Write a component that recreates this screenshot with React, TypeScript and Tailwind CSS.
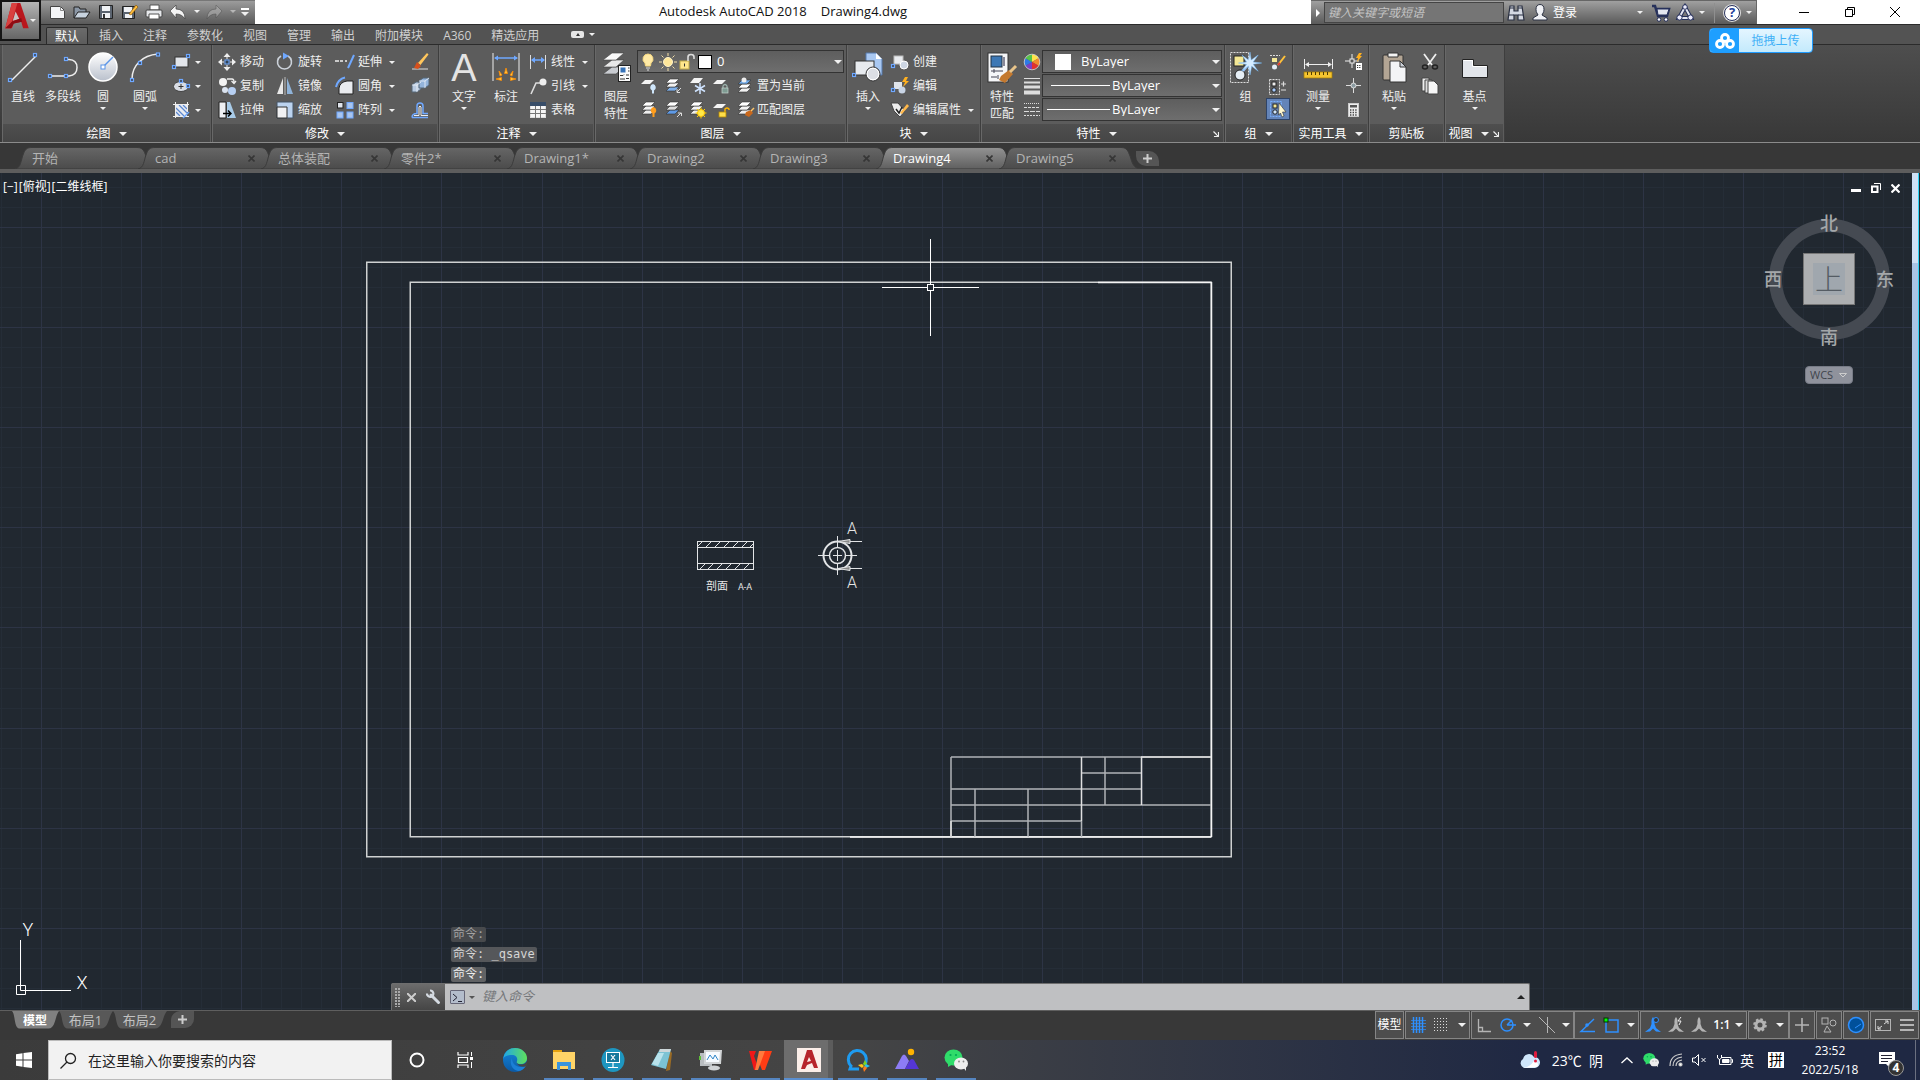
import React from "react";

type Kids = { children?: React.ReactNode };

const BLUE = "#6fa8ff";

function Ico({ s = 20, children }: Kids & { s?: number }) {
  return (
    <svg width={s} height={s} viewBox={`0 0 ${s} ${s}`} fill="none" className="shrink-0" aria-hidden="true">
      {children}
    </svg>
  );
}

function Tri({ big = false }: { big?: boolean }) {
  return big ? (
    <svg width="8" height="4" viewBox="0 0 8 4" className="shrink-0" aria-hidden="true"><path d="M0 0H8L4 4Z" fill="#f0f0f0" /></svg>
  ) : (
    <svg width="6" height="3" viewBox="0 0 6 3" className="shrink-0" aria-hidden="true"><path d="M0 0H6L3 3Z" fill="#f0f0f0" /></svg>
  );
}

/* Small grip square drawn at the ends of geometry icons. */
function Grip({ x, y }: { x: number; y: number }) {
  return <rect x={x - 1.5} y={y - 1.5} width="3" height="3" fill="#3b4658" stroke={BLUE} strokeWidth="1.2" />;
}

function Sheets({ fills, y = 3 }: { fills: string[]; y?: number }) {
  return (
    <>
      {fills.map((f, i) => (
        <path key={i} d={`M7 ${y + (fills.length - 1 - i) * 4}h9l-4 4h-9z`} fill={f} stroke="#333" strokeWidth=".6" />
      ))}
    </>
  );
}

function Launcher() {
  return (
    <svg width="6" height="6" viewBox="0 0 6 6" aria-hidden="true"><path d="M.5 .5L5 5M5.500 1V5.500H1" stroke="#eee" fill="none" strokeWidth="1.200" /></svg>
  );
}

function Panel({ title, width, arrow = true, launcher = false, children }: Kids & { title: string; width: string; arrow?: boolean; launcher?: boolean }) {
  return (
    <section className={`flex shrink-0 flex-col border-r border-l border-r-[#3e3e3e] border-l-[#686868] bg-[#5c5c5c] ${width}`}>
      <div className="-ml-px flex h-[79px] pt-[5px]">{children}</div>
      <button className={`relative mr-px flex h-[18px] items-center justify-center gap-2 bg-linear-to-b from-[#4f4f4f] to-[#464646] pt-px whitespace-nowrap text-white ${launcher ? "pr-3" : ""}`}>
        <span>{title}</span>
        {arrow && <Tri big />}
        {launcher && <span className="absolute right-[4px]"><Launcher /></span>}
      </button>
    </section>
  );
}

function Big({ icon, label, label2, width, arrow = false }: { icon: React.ReactNode; label: string; label2?: string; width: string; arrow?: boolean }) {
  return (
    <button className={`flex shrink-0 flex-col items-center pt-[2px] ${width}`}>
      <span className="mb-1 h-8">{icon}</span>
      <span className="leading-[17px] whitespace-nowrap">{label}</span>
      {label2 && <span className="leading-[17px]">{label2}</span>}
      {arrow && <span className="mt-[2px]"><Tri /></span>}
    </button>
  );
}

function Row({ icon, label, arrow = false }: { icon: React.ReactNode; label?: string; arrow?: boolean }) {
  return (
    <button className="flex h-6 items-center gap-[2px] whitespace-nowrap">
      <span className="flex w-[22px] justify-center">{icon}</span>
      {label && <span>{label}</span>}
      {arrow && <span className={label ? "ml-[5px]" : "ml-px"}><Tri /></span>}
    </button>
  );
}

/* ---------- ribbon icons ---------- */
const line = <Ico s={32}><path d="M5 28L29 4" stroke="#eee" strokeWidth="1.500" /><Grip x={3} y={28} /><Grip x={28} y={3} /></Ico>;
const pline = <Ico s={32}><path d="M2 24H18H22Q30 23 30 15.500T22 7.500H18" stroke="#eee" strokeWidth="1.500" /><Grip x={3} y={24} /><Grip x={19} y={24} /><Grip x={19} y={7} /></Ico>;
const circle = (
  <Ico s={32}>
    <defs><linearGradient id="ball" x2="0" y2="1"><stop stopColor="#fff" /><stop offset="1" stopColor="#b9c0cc" /></linearGradient></defs>
    <circle cx="16" cy="15" r="14" fill="url(#ball)" stroke="#fff" strokeWidth="1.500" /><path d="M16 15L26 5" stroke="#5b95e8" strokeWidth="1.500" /><rect x="14" y="13" width="4" height="4" fill="#fff" stroke="#5b95e8" />
  </Ico>
);
const arc = <Ico s={32}><path d="M3 27Q3 17 10 10T29 2" stroke="#eee" strokeWidth="1.500" /><Grip x={3} y={28} /><Grip x={11} y={11} /><Grip x={29} y={2.500} /></Ico>;
const rectI = <Ico><rect x="4" y="5" width="13" height="10" fill="#e2e5ea" stroke="#333" /><Grip x={3} y={15} /><Grip x={17} y={4} /></Ico>;
const ellI = <Ico><ellipse cx="10" cy="10.500" rx="7.500" ry="5" fill="#d9dde4" stroke="#444" /><path d="M10 8v5M7.500 10.500h5" stroke="#333" /><Grip x={10} y={5} /><Grip x={17} y={10} /></Ico>;
const hatchI = <Ico><rect x="5" y="5" width="11" height="11" fill="#e8ecf3" /><path d="M5 8l8 8M5 12l4 4M8 5l8 8M12 5l4 4" stroke="#5b87cf" strokeWidth="1.200" /><path d="M2 4.500H18M2 16.500H18M4.500 2V18M16.500 2V12" stroke="#eee" /><path d="M12 18l6-6" stroke={BLUE} strokeWidth="1.500" /></Ico>;
const moveI = <Ico><path d="M10 1l3.500 4h-7zM10 19l3.500-4h-7zM1 10l4-3.500v7zM19 10l-4-3.500v7z" fill="#eee" /><rect x="8" y="8" width="4" height="4" fill="#345" stroke={BLUE} /><path d="M10 4v3M10 13v3M4 10h3M13 10h3" stroke="#eee" /></Ico>;
const rotI = <Ico><path d="M6 4A7 7 0 1 0 13 4" stroke="#ccd2da" strokeWidth="1.600" /><path d="M8 .5L14 4L8 7.500z" fill={BLUE} /></Ico>;
const extI = <Ico><path d="M0 9h4M5 9h3M10 9h2" stroke="#eee" strokeWidth="1.500" /><path d="M19 3L13 16" stroke={BLUE} strokeWidth="2" /></Ico>;
const copyI = <Ico><circle cx="6" cy="6" r="4" fill="#f2f2f2" /><circle cx="8" cy="14" r="3" fill="#dbe3ef" /><circle cx="15" cy="15" r="4" fill="#b7cff2" /><path d="M10 3h5q2 0 2 3M14.500 5l2.500 2.500L19 5" stroke="#eee" strokeWidth="1.300" /></Ico>;
const mirI = <Ico><path d="M8 2v16H2z" fill="#e8e8e8" /><path d="M12 2v16h6z" fill="#8fb3d9" /><path d="M10 1v18" stroke="#bbb" /></Ico>;
const filI = <Ico><path d="M4 18V12Q5 6 12 5h6v13z" fill="#e9ebee" stroke="#222" /><path d="M1 11Q3 3 10 1.500" stroke={BLUE} strokeWidth="2" /></Ico>;
const strI = <Ico><path d="M2 2h7v16H2z" fill="#eef0f3" stroke="#222" /><path d="M10 2h3l6 16h-9z" fill="#a8cbe8" /><path d="M6 13.500h8M11 10.500l3 3-3 3" stroke="#000" strokeWidth="1.400" /></Ico>;
const scaI = <Ico><path d="M2 2h16v16H2z" fill="#bcd3ef" stroke="#456" /><path d="M2 7h10v11H2z" fill="#f0f1f3" stroke="#333" /></Ico>;
const arrI = <Ico><rect x="2.500" y="2.500" width="5.500" height="5.500" fill="#dfe3ea" stroke="#222" /><rect x="12" y="2.500" width="6" height="6" fill="#a9c5ee" stroke={BLUE} /><rect x="2" y="12" width="6" height="6" fill="#a9c5ee" stroke={BLUE} /><rect x="12" y="12" width="6" height="6" fill="#a9c5ee" stroke={BLUE} /></Ico>;
const brushI = <Ico><path d="M2 17h16" stroke="#ddd" /><path d="M8 11L17 1l1.500 1.500L10.500 13z" fill="#ffc65c" /><path d="M7 10l4 4-3 3-4-1z" fill="#d8501c" /></Ico>;
const explI = <Ico><path d="M2 9l4-3h5v7l-4 3H2z" fill="#b9cbe2" stroke="#567" /><path d="M9 5l4-3h6v7l-4 3H9z" fill="#93b4dc" stroke="#567" /><path d="M2 9h5v7M7 9l4-3M9 5h6v7M15 5l4-3" stroke="#f0f4fa" strokeWidth=".8" /></Ico>;
const offI = <Ico><path d="M2 17.500H18M2 17.500q0-4 5-4V6Q7 3 10 3t3 3v7.500h5" stroke={BLUE} strokeWidth="1.500" /><path d="M4 15.500h5V7q1-2 2 0v8.500h7" stroke="#eee" /></Ico>;
const textI = <span className="block font-['Liberation_Sans',sans-serif] text-[38px] leading-8 text-[#e4e4e4]">A</span>;
const dimI = <Ico s={32}><path d="M3 1v28M29 1v28" stroke="#eee" /><path d="M5 6h22" stroke={BLUE} strokeWidth="1.500" /><path d="M4 6l4-2.500v5zM28 6l-4-2.500v5z" fill={BLUE} /><path d="M16 16l1.500 5.500h-3zM9 19l3 4-2 1zM23 19l-3 4 2 1zM6 27l5.500-1.500v3zM26 27l-5.500-1.500v3z" fill="#ffcf4b" stroke="#ff8a00" strokeWidth=".8" /></Ico>;
const linI = <Ico><path d="M2.500 3v14M17.500 3v14" stroke="#ddd" /><path d="M4 8h12" stroke={BLUE} strokeWidth="1.500" /><path d="M3 8l4-3v6zM17 8l-4-3v6z" fill={BLUE} /></Ico>;
const leadI = <Ico><path d="M3 18L8 7H12" stroke="#ddd" strokeWidth="1.600" /><circle cx="15" cy="6" r="3.500" fill="#eee" /></Ico>;
const tabI = <Ico><rect x="2.500" y="2.500" width="15" height="15" fill="#f5f5f5" stroke="#ddd" /><rect x="2" y="2" width="16" height="4" fill="#384d68" /><path d="M2 9.500h16M2 13.500h16M7.500 6v12M12.500 6v12" stroke="#777" /></Ico>;
const layI = (
  <Ico s={32}>
    <path d="M12 15h12l-8 7H3z" fill="#c9ccd1" stroke="#444" strokeWidth=".6" /><path d="M12 8h12l-8 7H3z" fill="#e8e8e8" stroke="#444" strokeWidth=".6" /><path d="M12 1h12l-8 7H3z" fill="#fafafa" stroke="#444" strokeWidth=".6" />
    <rect x="18.500" y="13.500" width="12" height="16" fill="#fafafa" stroke="#222" /><rect x="20.500" y="15.500" width="5" height="5" fill="#3672b8" /><path d="M28 16h1.500M28 19h1.500M20 23.500h3l1-1M26 23h3M20 27h5M26 26.500h3" stroke="#333" />
  </Ico>
);
const bulbI = <Ico><path d="M10 2a5 5 0 0 1 3 9l-.5 3h-5L7 11a5 5 0 0 1 3-9z" fill="#ffeaa6" stroke="#f7d981" /><path d="M8 16h4M9 18h2" stroke="#ddd" /></Ico>;
const sunI = <Ico><circle cx="10" cy="10" r="4.500" fill="#ffe79a" stroke="#fff3c8" /><path d="M10 1v3M10 16v3M1 10h3M16 10h3M3.500 3.500l2 2M14.500 14.500l2 2M16.500 3.500l-2 2M5.500 14.500l-2 2" stroke="#f3dfa8" /></Ico>;
const lockI = <Ico><rect x="2" y="9" width="9" height="8" fill="#ffe68c" stroke="#bfa84a" /><path d="M10 9V5q0-2.500 3-2.500T16 5v2" stroke="#ddd" strokeWidth="1.600" /><path d="M6.500 11.500v3" stroke="#333" /></Ico>;
const lA = [
  <><path d="M6 4h9l-4 4H2z" fill="#f4f4f4" /><path d="M14 8a3.500 3.500 0 0 1 1 6.500v3h-2v-3A3.500 3.500 0 0 1 14 8z" fill="#cfe6fb" /></>,
  <><Sheets fills={["#7fb0ea", "#f1f1f1", "#fff"]} /><path d="M18 12l-4 4M14 13v3.500h3" stroke="#ddd" /></>,
  <><path d="M7 2h9l-4 5H3z" fill="#f4f4f4" /><path d="M13 7v11M8 9.500l10 6M18 9.500l-10 6" stroke="#cfe3ff" strokeWidth="1.500" /></>,
  <><path d="M6 4h9l-4 4H2z" fill="#f4f4f4" /><path d="M12 12v-2q2-3 4 0v2" stroke="#9db3ad" strokeWidth="1.300" /><rect x="11" y="12" width="6" height="5" fill="#7f9c93" stroke="#c5d4cf" strokeWidth=".7" /></>,
  <><Sheets fills={["#f1f1f1", "#fff", "#6fa8e6"]} y={4} /><circle cx="9" cy="4" r="2.500" fill="#eee" /></>,
];
const lB = [
  <><Sheets fills={["#eee", "#f3f3f3", "#fff"]} y={2} /><path d="M14.500 7a3.500 3.500 0 0 1 1 6.500v3.500h-2v-3.500a3.500 3.500 0 0 1 1-6.500z" fill="#ff9d1c" /></>,
  <><Sheets fills={["#5f9ae6", "#ddd", "#fff"]} y={2} /><path d="M14 17l4-4M15 13h3.500v3" stroke="#ddd" /></>,
  <><Sheets fills={["#eee", "#f3f3f3", "#fff"]} y={2} /><path d="M14 7.500v11M8.500 13h11M10 9l8 8M18 9l-8 8" stroke="#ffd200" /><circle cx="14" cy="13" r="3.500" fill="#ffe94a" stroke="#ffc400" /></>,
  <><path d="M6 4h9l-4 4H2z" fill="#f4f4f4" /><path d="M14 12V9q2-2 4 0v1" stroke="#ffb400" strokeWidth="1.400" /><rect x="8" y="12" width="7" height="5" fill="#ffdf4a" stroke="#b98a00" strokeWidth=".8" /></>,
  <><Sheets fills={["#eee", "#f3f3f3", "#fff"]} y={2} /><path d="M11 12l5-2 2 3-4 4-4-2z" fill="#c9681c" /><path d="M16 11l3-3" stroke="#ffc66b" strokeWidth="1.500" /></>,
];
const insI = <Ico s={32}><path d="M14 1h10l6 6v16H14z" fill="#a9c8f2" stroke="#5578ab" /><path d="M24 1v6h6z" fill="#fff" /><rect x="3" y="9" width="19" height="14" fill="#e7eaee" stroke="#333" /><circle cx="21" cy="22" r="7" fill="#dcdfe5" stroke="#333" /><circle cx="21" cy="22" r="5.800" stroke="#fff" /><Grip x={2} y={23} /></Ico>;
const creI = <Ico><rect x="4" y="4" width="9" height="8" fill="#e9ecf0" stroke="#bbb" /><circle cx="14" cy="13" r="4" fill="#cdd6e4" stroke="#fff" /><Grip x={3} y={14} /></Ico>;
const ediI = <Ico><rect x="4" y="6" width="8" height="7" fill="#dfe4ea" /><circle cx="12" cy="14" r="3.500" fill="#c9d5e6" /><path d="M15 1l-3 5h3l-2 5 6-6h-3l2-4z" fill="#ffb01f" /><Grip x={3} y={14} /></Ico>;
const attI = <Ico><path d="M1 3h7l7 8-5 6-6-6z" fill="#eee" stroke="#444" /><path d="M6 9l3 4 3-6" stroke="#222" strokeWidth="1.500" /><path d="M10 13l7-9 2 2-7 8z" fill="#ffb84a" /></Ico>;
const matI = <Ico s={32}><rect x="2" y="1" width="20" height="29" fill="#f5f6f8" stroke="#333" /><rect x="5" y="4" width="11" height="11" fill="#3d78b5" stroke="#234" /><path d="M18 5v9" stroke="#889" strokeWidth="2" /><path d="M5 19h12M8 17v4M5 25h6M12 23v4" stroke="#445" /><path d="M15 24l8-6 4 4-8 9-6-3z" fill="#c4792f" /><path d="M24 20l6-6" stroke="#e8c48a" strokeWidth="3" /></Ico>;
const wheel = (
  <Ico>
    <path d="M9 10V2.500A7.500 7.500 0 0 1 15.500 6.200z" fill="#ffe34a" /><path d="M9 10l6.500-3.800a7.500 7.500 0 0 1 0 7.600z" fill="#f28a2e" /><path d="M9 10l6.500 3.800A7.500 7.500 0 0 1 9 17.500z" fill="#e0322e" /><path d="M9 10v7.500a7.500 7.500 0 0 1-6.500-3.700z" fill="#7c3fc4" /><path d="M9 10l-6.500 3.800a7.500 7.500 0 0 1 0-7.600z" fill="#2e7ae6" /><path d="M9 10L2.500 6.200A7.500 7.500 0 0 1 9 2.500z" fill="#56c34a" /><circle cx="9" cy="10" r="7.800" stroke="#fff" strokeOpacity=".6" />
  </Ico>
);
const lwI = <Ico><path d="M1 2.500h16" stroke="#ddd" /><path d="M1 6.500h16" stroke="#ddd" strokeWidth="2" /><path d="M1 11h16" stroke="#ddd" strokeWidth="3" /><path d="M1 16.500h16" stroke="#ddd" strokeWidth="4" /></Ico>;
const ltI = <Ico><path d="M1 3.500h16" stroke="#ddd" strokeDasharray="1 1" /><path d="M1 7.500h16" stroke="#ddd" strokeDasharray="3 1" /><path d="M1 11.500h16" stroke="#ddd" strokeDasharray="5 1" /><path d="M1 15.500h16" stroke="#ddd" strokeDasharray="2 1" /></Ico>;
const grpI = <Ico s={32}><rect x=".5" y=".5" width="18" height="30" stroke="#ddd" strokeDasharray="2 1" /><rect x="4" y="4" width="10" height="10" fill="#f4e896" stroke="#222" /><circle cx="10" cy="23" r="5" fill="#e6eef5" stroke="#222" /><path d="M13 19L20 11" stroke="#9cc8ff" strokeWidth="2" /><path d="M20 0l1.200 8 7-5-5 7 8.500 1-8.500 1.200 5 7-6.500-5L20 23l-1.500-9-7 5 5-6.500-8-1.500 8-1-4.500-7 6.500 5z" fill="#d5ecff" stroke="#6fb4f5" strokeWidth=".5" /></Ico>;
const g1 = <Ico><path d="M2 2.500h10" stroke="#ddd" strokeDasharray="2 1" /><rect x="4" y="5" width="5" height="4" fill="#f4e896" /><circle cx="6.500" cy="14" r="2.500" fill="#e4eef8" /><path d="M10 12l7-9" stroke="#ffc23a" strokeWidth="2" /><path d="M10 12l2-2" stroke="#e03a3a" strokeWidth="2" /></Ico>;
const g2 = <Ico><rect x="1.500" y="2.500" width="10" height="15" stroke="#ddd" strokeDasharray="2 1" /><rect x="4" y="5" width="4" height="4" fill="#eee" stroke="#222" /><circle cx="6" cy="13" r="2.200" fill="#a8ccff" stroke="#222" /><path d="M13 7h5M15.500 4.500v5M13 13h5" stroke="#ddd" strokeWidth="1.200" /></Ico>;
const g3 = <Ico><rect x="2.500" y="2.500" width="11" height="15" stroke="#78b0ff" strokeDasharray="2 1" /><rect x="5" y="5" width="4" height="4" fill="#f4e896" stroke="#222" /><circle cx="7" cy="13" r="2.200" fill="#cfe6ff" stroke="#222" /><path d="M11 4l7 9h-3.500l1.500 4-2 1-1.500-4-2 2z" fill="#fff7cf" stroke="#333" strokeWidth=".6" /></Ico>;
const meaI = <Ico s={32}><path d="M2.500 7v10M30.500 7v10M4 12.500h25" stroke="#eee" /><path d="M3 12.500l4-2.500v5zM30 12.500l-4-2.500v5z" fill="#eee" /><rect x="2" y="20" width="28" height="6" fill="#f4c430" stroke="#a67c00" strokeWidth=".7" /><path d="M5.500 20v3M9.500 20v3M13.500 20v3M17.500 20v3M21.500 20v3M25.500 20v3" stroke="#4f3b00" /></Ico>;
const u1 = <Ico><path d="M8 2v14M1 9h14" stroke="#eee" /><rect x="6" y="7" width="4" height="4" fill="#555" stroke="#eee" /><path d="M15 1l-3 5h2l-1 4 5-6h-2l2-3z" fill="#ffb01f" /><rect x="12" y="11" width="6" height="7" fill="#fff" /><path d="M13 13.500h4M13 15.500h4" stroke="#333" strokeDasharray="1 .8" /></Ico>;
const u2 = <Ico><path d="M9.500 2v15M2 9.500h15" stroke="#ddd" /><circle cx="9.500" cy="9.500" r="2.500" fill="#8a9aa0" stroke="#ddd" /></Ico>;
const u3 = <Ico><rect x="4.500" y="3.500" width="10" height="13" fill="#eee" stroke="#ccc" /><rect x="6" y="5" width="7" height="2.500" fill="#555" /><path d="M6 10h7M6 12.500h7M6 15h7" stroke="#444" strokeWidth="1.300" strokeDasharray="1.400 1.200" /></Ico>;
const pasI = <Ico s={32}><rect x="5" y="3" width="20" height="25" rx="1" fill="#b3a594" stroke="#333" /><path d="M10 1h10v4H10z" fill="#f4f4f4" stroke="#333" /><path d="M12 9h10l6 6v15H12z" fill="#f3f4f6" stroke="#333" /><path d="M22 9v6h6z" fill="#cbd0d8" stroke="#333" /></Ico>;
const cutI = <Ico><path d="M4 2l8 11M16 2L8 13" stroke="#eee" strokeWidth="1.800" /><ellipse cx="5" cy="15" rx="2.500" ry="2" stroke="#222" strokeWidth="1.500" /><ellipse cx="15" cy="15" rx="2.500" ry="2" stroke="#222" strokeWidth="1.500" /></Ico>;
const cpI = <Ico><path d="M2 2h7v13H2z" fill="#eee" stroke="#444" /><path d="M5 4h7v13H5z" fill="#ddd" stroke="#444" /><path d="M8 5h6l4 4v9H8z" fill="#f7f7f7" stroke="#444" /></Ico>;
const baseI = <Ico s={32}><path d="M3.500 7.500h11v6h14v12h-25z" fill="#e2e5ea" stroke="#222" /><path d="M4.500 8.500h9v6h14" stroke="#fff" /></Ico>;

function Combo({ label, value, lead }: { label: string; value: string; lead: React.ReactNode }) {
  return (
    <label className="flex h-[23px] items-center border border-[#333] bg-linear-to-b from-[#5e5e5e] to-[#6e6e6e] pr-px">
      {lead}
      <select aria-label={label} className="min-w-0 flex-1 appearance-none bg-transparent text-[13px] leading-none text-white outline-none">
        <option>{value}</option>
      </select>
      <Tri big />
    </label>
  );
}

function Ribbon() {
  return (
    <div className="flex h-[99px] border-y border-t-[#2b2b2b] border-b-[#8b8b8b] bg-linear-to-b from-[#4e4e4e] to-[#383838] pl-[2px] text-[12px] text-[#efefef]">
      <Panel title="绘图" width="w-[210px]">
        <Big icon={line} label="直线" width="w-[42px]" />
        <Big icon={pline} label="多段线" width="w-[38px]" />
        <Big icon={circle} label="圆" width="w-[42px]" arrow />
        <Big icon={arc} label="圆弧" width="w-[42px]" arrow />
        <div className="flex flex-col pl-1">
          <Row icon={rectI} arrow /><Row icon={ellI} arrow /><Row icon={hatchI} arrow />
        </div>
      </Panel>
      <Panel title="修改" width="w-[227px]">
        <div className="flex w-[62px] flex-col pl-1"><Row icon={moveI} label="移动" /><Row icon={copyI} label="复制" /><Row icon={strI} label="拉伸" /></div>
        <div className="flex w-[60px] flex-col"><Row icon={rotI} label="旋转" /><Row icon={mirI} label="镜像" /><Row icon={scaI} label="缩放" /></div>
        <div className="flex w-[75px] flex-col"><Row icon={extI} label="延伸" arrow /><Row icon={filI} label="圆角" arrow /><Row icon={arrI} label="阵列" arrow /></div>
        <div className="flex flex-col"><Row icon={brushI} /><Row icon={explI} /><Row icon={offI} /></div>
      </Panel>
      <Panel title="注释" width="w-[156px]">
        <div className="w-[3px]" />
        <Big icon={textI} label="文字" width="w-[44px]" arrow />
        <Big icon={dimI} label="标注" width="w-[40px]" />
        <div className="flex flex-col pl-px"><Row icon={linI} label="线性" arrow /><Row icon={leadI} label="引线" arrow /><Row icon={tabI} label="表格" /></div>
      </Panel>
      <Panel title="图层" width="w-[252px]">
        <Big icon={layI} label="图层" label2="特性" width="w-[42px]" />
        <div className="flex w-[207px] flex-col">
          <Combo label="图层" value="0" lead={<span className="mr-[5px] flex items-center">{bulbI}{sunI}{lockI}<span className="size-[14px] border border-black bg-white" /></span>} />
          <div className="mt-px flex h-6 items-center">
            {lA.map((g, i) => <button key={i} aria-label="图层工具" className="flex w-6 justify-center"><Ico>{g}</Ico></button>)}
            <button>置为当前</button>
          </div>
          <div className="flex h-6 items-center">
            {lB.map((g, i) => <button key={i} aria-label="图层工具" className="flex w-6 justify-center"><Ico>{g}</Ico></button>)}
            <button>匹配图层</button>
          </div>
        </div>
      </Panel>
      <Panel title="块" width="w-[134px]">
        <Big icon={insI} label="插入" width="w-[42px]" arrow />
        <div className="flex flex-col"><Row icon={creI} label="创建" /><Row icon={ediI} label="编辑" /><Row icon={attI} label="编辑属性" arrow /></div>
      </Panel>
      <Panel title="特性" width="w-[244px]" launcher>
        <Big icon={matI} label="特性" label2="匹配" width="w-[42px]" />
        <div className="flex w-[19px] flex-col [&>span]:flex [&>span]:h-6 [&>span]:items-center"><span>{wheel}</span><span>{lwI}</span><span>{ltI}</span></div>
        <div className="flex w-[180px] flex-col gap-px">
          <Combo label="对象颜色" value="ByLayer" lead={<span className="mr-[10px] ml-3 size-4 bg-white" />} />
          <Combo label="线宽" value="ByLayer" lead={<span className="mr-[2px] ml-2 h-px w-[59px] bg-white" />} />
          <Combo label="线型" value="ByLayer" lead={<span className="mr-[2px] ml-1 h-px w-[63px] bg-white" />} />
        </div>
      </Panel>
      <Panel title="组" width="w-[68px]">
        <Big icon={grpI} label="组" width="w-[41px]" />
        <div className="flex w-6 flex-col items-center">
          <button aria-label="组编辑" className="h-6 pt-[2px]">{g1}</button>
          <button aria-label="解除编组" className="h-6 pt-[2px]">{g2}</button>
          <button aria-label="启用组选择" className="flex h-[22px] w-6 items-center justify-center border border-[#2f4468] bg-[#6484b8]">{g3}</button>
        </div>
      </Panel>
      <Panel title="实用工具" width="w-[76px]">
        <Big icon={meaI} label="测量" width="w-[50px]" arrow />
        <div className="flex flex-col"><Row icon={u1} /><Row icon={u2} /><Row icon={u3} /></div>
      </Panel>
      <Panel title="剪贴板" width="w-[76px]" arrow={false}>
        <Big icon={pasI} label="粘贴" width="w-[50px]" arrow />
        <div className="flex flex-col"><Row icon={cutI} /><Row icon={cpI} /></div>
      </Panel>
      <Panel title="视图" width="w-[60px]" launcher>
        <Big icon={baseI} label="基点" width="w-[59px]" arrow />
      </Panel>
    </div>
  );
}

function TitleBar() {
  return (
    <div className="flex h-6 bg-white">
      <div className="flex w-[214px] items-center gap-[4px] border-t border-[#777] bg-linear-to-b from-[#9c9c9c] to-[#5a5a5a] pb-[2px] pl-[7px]">
        <button aria-label="新建"><Ico><path d="M2.500 4.500h10l4 4v8h-14z" fill="#f4f5f7" stroke="#444" /><path d="M12.500 4.500v4h4" stroke="#888" /></Ico></button>
        <button aria-label="打开"><Ico><path d="M2 16V5h5l1 2h6v3" fill="#8b97a6" stroke="#222" /><path d="M2 16l4-6h12l-4 6z" fill="#c8d3df" stroke="#222" /></Ico></button>
        <button aria-label="保存"><Ico><path d="M3.500 3.500h13v13h-13z" fill="#5b6470" stroke="#222" /><path d="M6 4h8v5H6zM6 11h8v5H6z" fill="#f0f2f5" /><path d="M8 12v4" stroke="#333" strokeWidth="2" /></Ico></button>
        <button aria-label="另存为"><Ico><path d="M2.500 4.500h12v12h-12z" fill="#5b6470" stroke="#222" /><path d="M4 5h8v5H4zM5 12h7v4H5z" fill="#f0f2f5" /><path d="M9 12l7-9 2 2-7 8z" fill="#ffbd3d" stroke="#7a4b00" strokeWidth=".6" /></Ico></button>
        <button aria-label="打印"><Ico><path d="M6 3h9v5H6z" fill="#fff" stroke="#555" /><rect x="2" y="8" width="16" height="7" rx="1" fill="#e6e8eb" stroke="#444" /><path d="M5 12h10v5H5z" fill="#fff" stroke="#555" /></Ico></button>
        <button aria-label="放弃" className="flex items-center gap-[6px]"><Ico><path d="M2 9l6-6v4q9 0 9 10-3-5-9-5v4z" fill="#f4f4f4" stroke="#444" strokeWidth=".7" /></Ico><Tri /></button>
        <button aria-label="重做" className="flex items-center gap-[6px] opacity-50"><Ico><path d="M18 9l-6-6v4Q3 7 3 17q3-5 9-5v4z" fill="#bbb" stroke="#444" strokeWidth=".7" /></Ico><Tri /></button>
        <button aria-label="自定义" className="ml-px flex flex-col gap-[2px]"><span className="h-[2px] w-2 bg-white" /><Tri big /></button>
      </div>
      <h1 className="flex flex-1 items-center justify-center gap-[14px] text-[13px] text-[#111]">
        <span>Autodesk AutoCAD 2018</span><span>Drawing4.dwg</span>
      </h1>
      <div className="flex w-[446px] shrink-0 items-center border-t border-r border-[#666] bg-linear-to-b from-[#a0a0a0] to-[#5a5a5a] text-[12px] text-white">
        <button aria-label="展开" className="flex w-[13px] justify-center"><svg width="4" height="8"><path d="M0 0L4 4L0 8Z" fill="#fff" /></svg></button>
        <input aria-label="搜索" placeholder="键入关键字或短语" className="h-[21px] w-[180px] border border-[#444] bg-[#757575] px-[3px] text-[12px] italic outline-none placeholder:text-[#c4c4c4]" />
        <button aria-label="查找" className="ml-[2px]"><Ico><path d="M4 3h4v5h4V3h4l2 14h-6v-5H8v5H2z" fill="#d5d9e2" stroke="#2b3142" strokeWidth="1.200" /><path d="M4 5h4M12 5h4M2.500 12H8M12 12h5.500" stroke="#2b3142" /></Ico></button>
        <button className="ml-1 flex items-center gap-[3px] whitespace-nowrap"><Ico><path d="M10 1.500c3 0 4 2 4 5s-1.500 4-2 5.500l5 3V17H3v-2l5-3C7.500 10.500 6 9.500 6 6.500s1-5 4-5z" fill="#f0f1f5" stroke="#2b3142" /></Ico><span>登录</span></button>
        <span className="ml-[60px]"><Tri /></span>
        <button aria-label="商店" className="ml-[8px]"><Ico><path d="M1 3h3l3 10h9l2-7H5" stroke="#26305a" strokeWidth="2.500" /><path d="M6 6h12l-2 6H7z" fill="#e3e6f0" stroke="#26305a" /><circle cx="8" cy="16.500" r="1.800" fill="#fff" stroke="#26305a" /><circle cx="15" cy="16.500" r="1.800" fill="#fff" stroke="#26305a" /></Ico></button>
        <button aria-label="应用" className="ml-1 flex items-center gap-1"><Ico><path d="M10 4L4 15h12z" stroke="#26305a" strokeWidth="4" /><path d="M10 4L4 15h12z" stroke="#e3e6f0" strokeWidth="2" /><circle cx="10" cy="4" r="2.300" fill="#eef" stroke="#26305a" /><circle cx="4.500" cy="14.500" r="2.600" fill="#eef" stroke="#26305a" /><circle cx="15.500" cy="14.500" r="2.600" fill="#eef" stroke="#26305a" /></Ico><Tri /></button>
        <span className="mr-[9px] ml-[9px] h-5 w-px bg-[#8f8f8f]" />
        <button aria-label="帮助" className="flex items-center gap-[6px]"><span className="flex size-4 items-center justify-center rounded-full border border-[#26305a] bg-white text-[13px] leading-none font-bold text-[#23409a] ring-1 ring-[#ddd]">?</span><Tri /></button>
      </div>
      <div className="flex w-[163px] shrink-0 items-center pl-[24px]">
        <button aria-label="最小化" className="flex w-[46px] justify-center"><span className="h-px w-[10px] bg-black" /></button>
        <button aria-label="还原" className="flex w-[45px] justify-center"><svg width="10" height="10" fill="none" stroke="#000"><path d="M.5 2.500h7v7h-7zM2.500 2V.5h7v7H8" /></svg></button>
        <button aria-label="关闭" className="flex w-[46px] justify-center"><svg width="10" height="10" stroke="#000"><path d="M0 0L10 10M10 0L0 10" /></svg></button>
      </div>
    </div>
  );
}

const MENU = ["默认", "插入", "注释", "参数化", "视图", "管理", "输出", "附加模块", "A360", "精选应用"];

function Header() {
  return (
    <header className="relative">
      <div className="flex bg-[#535353]">
        <button aria-label="应用程序菜单" className="flex h-[41px] w-[41px] shrink-0 items-start border-2 border-[#151515] bg-linear-to-b from-[#b5b5b5] to-[#666] pl-[2px]">
          <svg width="26" height="30" viewBox="0 0 27 32" aria-hidden="true"><path d="M8 1h9l9 27h-6l-2-7-8 2-2 5H1z" fill="#b9161d" /><path d="M8 1h6L6 28H1z" fill="#d9403f" /><path d="M12 10l4 8-7 2z" fill="#c9c4c4" /><path d="M1 28l7-7 10-4 1 4-9 2-3 5z" fill="#8e0c14" /></svg>
          <span className="mt-[17px] flex"><Tri /></span>
        </button>
        <div className="flex min-w-0 flex-1 flex-col">
          <TitleBar />
          <nav className="flex h-5 border-t border-[#2b2b2b] pl-[5px] text-[12px] text-[#d0d0d0]">
            {MENU.map((m, i) => (
              <button key={m} className={i === 0 ? "mt-[2px] rounded-t-xs border border-b-0 border-[#2b2b2b] bg-linear-to-b from-[#6b6b6b] to-[#5c5c5c] px-[8px] text-white" : i === 1 ? "pr-[10px] pl-[11px] pt-[2px]" : "px-[10px] pt-[2px]"}>{m}</button>
            ))}
            <button aria-label="最小化功能区" className="ml-[22px] flex items-center gap-[5px]"><span className="flex h-[7px] w-[13px] items-center justify-center rounded-[2px] bg-[#e6e6e6]"><svg width="4" height="3"><path d="M2 0L4 3H0Z" fill="#333" /></svg></span><Tri /></button>
          </nav>
        </div>
      </div>
      <Ribbon />
      <button className="absolute top-[28px] right-[107px] flex h-[25px] w-[104px] overflow-hidden rounded-[4px] border border-[#1e9bff] bg-linear-to-b from-[#e4f5ff] to-[#c3eafc] text-[12px] text-[#3fb0f7]">
        <span className="flex h-full w-[29px] items-center justify-center bg-[#1e9fff]"><svg width="20" height="16" fill="none" stroke="#fff" strokeWidth="2.800" aria-hidden="true"><circle cx="10" cy="5" r="3.500" /><circle cx="5" cy="11" r="3.500" /><circle cx="15" cy="11" r="3.500" /></svg></span>
        <span className="flex h-full flex-1 items-center justify-center">拖拽上传</span>
      </button>
    </header>
  );
}

const DOCS = ["开始", "cad", "总体装配", "零件2*", "Drawing1*", "Drawing2", "Drawing3", "Drawing4", "Drawing5"];

function DocTabs() {
  return (
    <div className="relative flex h-[30px] border-b-4 border-[#5d5d5d] bg-[#373737] pt-[4px] pl-[15px] text-[13px]">
      <svg width="1" height="1" className="absolute" aria-hidden="true"><defs>
        <linearGradient id="tabOff" x2="0" y2="1"><stop stopColor="#666" /><stop offset="1" stopColor="#4b4b4b" /></linearGradient>
        <linearGradient id="tabOn" x2="0" y2="1"><stop stopColor="#939393" /><stop offset="1" stopColor="#5f5f5f" /></linearGradient>
      </defs></svg>
      {DOCS.map((d, i) => (
        <div key={d} className={d === "Drawing4" ? "relative flex w-[123px] items-center pl-[17px] text-white" : "relative flex w-[123px] items-center pl-[17px] text-[#b4b4b4]"}>
          <svg width="141" height="22" viewBox="0 0 141 22" className="absolute top-0 left-0" aria-hidden="true">
            <path d="M0 22C6 21 6 13 8 8 10 2 12 .5 17 .5H122C128 .5 129 4 131 9 133 15 134 21 141 22Z" fill={d === "Drawing4" ? "url(#tabOn)" : "url(#tabOff)"} stroke="#3b3b3b" />
          </svg>
          <button className="relative flex-1 text-left leading-none">{d}</button>
          {i > 0 && <button aria-label="关闭标签" className="relative mr-[6px]"><svg width="7" height="7" stroke="#363636" strokeWidth="1.600"><path d="M.5 .5L6.500 6.500M6.500 .5L.5 6.500" /></svg></button>}
        </div>
      ))}
      <button aria-label="新图形" className="ml-[14px] mt-[4px] flex h-[15px] w-[23px] items-center justify-center rounded-tr-[10px] rounded-bl-[10px] bg-[#555]"><svg width="9" height="9" stroke="#ccc" strokeWidth="2"><path d="M4.500 0V9M0 4.500H9" /></svg></button>
    </div>
  );
}

/* Model space: 20 px minor grid, 100 px major grid, and the drawing itself. */
const STEPS = Array.from({ length: 101 }, (_, i) => i);

function ModelSpace() {
  return (
    <svg className="absolute inset-0 h-full w-full" fill="none" aria-hidden="true">
      <g transform="translate(0 -173)">
        <g stroke="#252d37">
          {STEPS.map((i) => <path key={i} d={`M${Math.round(1 + i * 20.02) + 0.5} 173v1000`} />)}
          {STEPS.slice(0, 50).map((i) => <path key={i} d={`M0 ${Math.round(167 + i * 20.02) + 0.5}h1920`} />)}
        </g>
        <g stroke="#2d3445">
          {STEPS.slice(0, 20).map((i) => <path key={i} d={`M${Math.round(41 + i * 100.1) + 0.5} 173v1000`} />)}
          {STEPS.slice(0, 10).map((i) => <path key={i} d={`M0 ${Math.round(227 + i * 100.1) + 0.5}h1920`} />)}
        </g>
        <g stroke="#cfd1d1" strokeWidth="1.500">
          <rect x="366.750" y="262.250" width="864.500" height="594.500" />
          <rect x="410.250" y="282.250" width="801" height="554.500" />
          <path d="M1211.500 282V837M1098 282.500H1211M850 837H1211" stroke="#f5f5f5" />
          <path d="M951 757H1211M951 789H1141M951 805H1211M951 821H1081M1081 773H1141M951 757V837M975 789V837M1028 789V837M1081.500 821V837M1105 757V805" stroke="#b0b3b6" />
          <path d="M1081.500 757V821M1141.500 757V805M1141 757H1211M951 821V837M975 837H1028" stroke="#e0e0e0" />
        </g>
        <g stroke="#fff">
          <path d="M882 287.500H927M934 287.500H979M930.500 239V284M930.500 291V336" /><rect x="927.500" y="284.500" width="6" height="6" />
        </g>
        <g stroke="#e2e4e6">
          <rect x="697.500" y="541.500" width="56" height="28" /><path d="M697 547.500h57M697 563.500h57" />
          <path d="M698 546l5-5M706 547l6-6M715 547l6-6M724 547l6-6M733 547l6-6M742 547l6-6M750 547l4-4M700 569l6-6M708 569l6-6M717 569l6-6M726 569l6-6M735 569l6-6M744 569l6-6" />
          <circle cx="837.500" cy="555.500" r="14" strokeWidth="2" /><circle cx="837.500" cy="555.500" r="8" strokeWidth="1.500" />
          <path d="M818 555.500h12M833 555.500h9M845 555.500h12M837.500 536v11M837.500 550v11M837.500 564v11" />
          <path d="M838 541.500h24M838 568.500h24" /><path d="M838 541.500l12-2v4zM838 568.500l12-2v4z" fill="#888" />
        </g>
        <g fill="#e6e6e6" fontFamily="Noto Sans CJK SC, sans-serif">
          <text x="706" y="590" fontSize="11">剖面</text>
          <text x="738" y="590" fontSize="9" fontFamily="Roboto">A-A</text>
          <text x="852" y="534" fontSize="16" textAnchor="middle" fontFamily="Roboto" fontWeight="300">A</text>
          <text x="852" y="588" fontSize="16" textAnchor="middle" fontFamily="Roboto" fontWeight="300">A</text>
        </g>
        <path d="M20.500 940V990.500H71M16.500 985.500h9v9h-9z" stroke="#fff" />
        <g fill="#fff" fontFamily="Roboto" fontWeight="300" fontSize="18" textAnchor="middle">
          <text x="28" y="936">Y</text><text x="82" y="989">X</text>
        </g>
      </g>
    </svg>
  );
}

function ViewCube() {
  return (
    <div className="absolute top-[39px] right-[17px] flex w-[132px] flex-col items-center text-[18px] font-medium text-[#a4a7aa]">
      <div className="relative flex h-[134px] w-full items-center justify-center">
        <div className="absolute size-[121px] rounded-full border-[13px] border-[#454a52]" />
        <button className="absolute top-0 leading-[22px]">北</button>
        <button className="absolute -bottom-[2px] leading-[22px]">南</button>
        <button className="absolute left-px leading-none">西</button>
        <button className="absolute right-px leading-none">东</button>
        <button className="flex size-[52px] items-center justify-center border border-[#777] bg-[#adafb1]"><span className="flex size-8 items-center justify-center bg-[#a0a7ae] text-[28px] leading-none font-light text-[#555c64]">上</span></button>
      </div>
      <button className="mt-[20px] flex h-[18px] w-12 items-center gap-[6px] rounded-[4px] border border-[#777b86] bg-[#8f929c] pl-1 text-[11px] font-normal text-[#3f444c]">WCS<svg width="8" height="5" fill="none" stroke="#ccc"><path d="M.5 .5H7.500L4 4Z" /></svg></button>
    </div>
  );
}

function CommandLine() {
  const chip = "rounded-[2px] px-[2px] leading-[15px] ";
  return (
    <div className="absolute right-[382px] bottom-0 left-[391px] text-[12px]">
      <div className="flex flex-col items-start gap-[5px] pb-px pl-[60px] font-['DejaVu_Sans_Mono','Noto_Sans_CJK_SC',monospace] whitespace-pre">
        <span className={chip + "bg-[#484a4d] text-[#a3a3a3]"}>命令:</span>
        <span className={chip + "bg-[#55575a] text-[#d6d6d6]"}>命令: _qsave</span>
        <span className={chip + "bg-[#616365] text-[#eee]"}>命令:</span>
      </div>
      <div className="flex h-[27px] rounded-t-[2px] border border-b-0 border-[#6e6e6e] bg-[#bfc0c2]">
        <div className="flex w-[53px] items-center gap-[7px] bg-linear-to-b from-[#6c6c6c] to-[#454545] pl-[3px]">
          <svg width="5" height="19"><path d="M1 0V19M4 0V19" stroke="#aaa" strokeDasharray="2 1" strokeWidth="2" /></svg>
          <button aria-label="关闭命令行"><svg width="9" height="9" stroke="#ccc" strokeWidth="2"><path d="M0 0L9 9M9 0L0 9" /></svg></button>
          <button aria-label="自定义" className="ml-[2px]"><svg width="16" height="16" viewBox="0 0 16 16" fill="none"><path d="M6 6l7.500 7.500" stroke="#d5dbe2" strokeWidth="3" strokeLinecap="round" /><path d="M2 4.500A3.200 3.200 0 1 0 5 1.500" stroke="#d5dbe2" strokeWidth="2.200" /></svg></button>
        </div>
        <button aria-label="最近使用的命令" className="ml-[5px] flex items-center gap-1"><span className="flex h-[14px] w-[15px] items-center justify-center rounded-[1px] border border-[#667] bg-[#b3bccb]"><svg width="11" height="9" stroke="#223" fill="none"><path d="M1 1L5 4.500L1 8M6 8.500h4" /></svg></span><svg width="6" height="3"><path d="M0 0H6L3 3Z" fill="#555" /></svg></button>
        <input aria-label="命令" placeholder="键入命令" className="ml-[7px] min-w-0 flex-1 bg-transparent text-[13px] italic outline-none placeholder:text-[#76787b]" />
        <button aria-label="历史" className="mr-[4px]"><svg width="8" height="4"><path d="M4 0L8 4H0Z" fill="#222" /></svg></button>
      </div>
    </div>
  );
}

function Workspace() {
  return (
    <div className="flex min-h-0 flex-1 bg-[#212830]">
      <main className="relative min-w-0 flex-1 overflow-hidden">
        <ModelSpace />
        <div className="relative flex items-start justify-between pt-[5px] pr-[12px] pl-[3px] text-[12px] leading-[18px] text-white">
          <div className="flex gap-px"><button>[−]</button><button>[俯视]</button><button>[二维线框]</button></div>
          <div className="flex items-center gap-[10px] pt-[5px]">
            <button aria-label="最小化视口" className="pt-[5px]"><span className="block h-[3px] w-[10px] bg-white" /></button>
            <button aria-label="还原视口"><svg width="10" height="10" fill="none" stroke="#fff"><path d="M1 3.500h5.500v5.500H1z" strokeWidth="2" /><path d="M3 .5h6.500V7" /></svg></button>
            <button aria-label="关闭视口"><svg width="9" height="9" stroke="#fff" strokeWidth="2.200"><path d="M.5 .5L8.500 8.500M8.500 .5L.5 8.500" /></svg></button>
          </div>
        </div>
        <ViewCube />
        <CommandLine />
      </main>
      <div className="mr-px w-[7px] border-r border-[#2fd3f5] bg-[#a9c4e6]"><div className="h-[90px] bg-[#cfe0f5]" /></div>
    </div>
  );
}

function SGroup({ children, width }: Kids & { width: string }) {
  return <div className={`flex items-center justify-around border border-[#858585] bg-[#4d4d4d] ${width}`}>{children}</div>;
}
function SB({ label, children }: Kids & { label: string }) {
  return <button aria-label={label} className="flex items-center justify-center">{children}</button>;
}
const anno = (c: string, extra?: React.ReactNode) => <Ico s={18}><path d="M9 1q2 2 1.500 7l1.500 4 5 4-5-.5L9 12.500 6 15.500 1 16l5-4 1.500-4Q7 3 9 1z" fill={c} />{extra}</Ico>;

function StatusBar() {
  const on = "#2e90ff";
  const off = "#b4b4b4";
  const tabs = ["模型", "布局1", "布局2"];
  return (
    <div className="flex h-[30px] border-t border-[#5f5f5f] bg-[#383838] text-[12px]">
      <div className="flex flex-1 items-start pl-[12px]">
        {tabs.map((t, i) => (
          <button key={t} className={i === 0 ? "relative flex h-[18px] w-[47px] items-center justify-center font-bold text-white" : "relative flex h-[18px] w-[54px] items-center justify-center text-[13px] text-[#c2c2c2]"}>
            <svg viewBox="0 0 54 18" preserveAspectRatio="none" className="absolute inset-0 h-full w-full" aria-hidden="true"><path d="M0 0C4 3 2 18 9 17.500H42C50 17.500 49 6 54 0Z" fill={i === 0 ? "#808080" : "#585858"} /></svg>
            <span className="relative pt-px pr-px">{t}</span>
          </button>
        ))}
        <button aria-label="新布局" className="ml-[4px] flex h-[17px] w-[23px] items-center justify-center rounded-tl-[9px] rounded-br-[9px] bg-[#555]"><svg width="9" height="9" stroke="#ccc" strokeWidth="2"><path d="M4.500 0V9M0 4.500H9" /></svg></button>
      </div>
      <div className="flex gap-px bg-[#3f3f3f] pr-px pb-px text-white">
        <SGroup width="w-[29px]"><button className="whitespace-nowrap">模型</button></SGroup>
        <SGroup width="w-[65px]">
          <SB label="栅格"><Ico s={18}><path d="M4.500 1v16M7.500 1v16M10.500 1v16M13.500 1v16" stroke={on} strokeWidth="1.500" /><path d="M2 4.500h15M2 7.500h15M2 10.500h15M2 13.500h15" stroke={on} strokeOpacity=".7" /></Ico></SB>
          <SB label="捕捉"><Ico s={18}><path d="M1 2.500h15M1 5.500h15M1 8.500h15M1 11.500h15M1 14.500h15" stroke="#ddd" strokeDasharray="1 2" /></Ico></SB>
          <Tri big />
        </SGroup>
        <div className="flex">
          <SGroup width="w-[103px]">
            <SB label="正交"><Ico s={18}><path d="M3.500 3v12.500H16M3.500 11.500h4v4" stroke={off} strokeWidth="1.300" /></Ico></SB>
            <SB label="极轴"><Ico s={18}><circle cx="8" cy="9" r="6" stroke={on} strokeWidth="1.500" /><path d="M8 9l5-5M8 9h9" stroke={on} strokeWidth="1.500" /></Ico></SB>
            <Tri big />
            <SB label="等轴测"><Ico s={18}><path d="M1 1l16 16M9.500 1v16" stroke={off} /></Ico></SB>
            <Tri big />
          </SGroup>
          <SGroup width="w-[65px]">
            <SB label="对象追踪"><Ico s={18}><path d="M16 3L3 15.500H17" stroke={on} strokeWidth="1.500" /><circle cx="9" cy="9" r="1.800" fill={on} /></Ico></SB>
            <SB label="对象捕捉"><Ico s={18}><rect x="4" y="4" width="12" height="12" stroke={on} strokeWidth="1.500" /><rect x="2" y="2" width="4" height="4" fill="#0f0" stroke="#030" /></Ico></SB>
            <Tri big />
          </SGroup>
        </div>
        <SGroup width="w-[107px]">
          <SB label="注释可见性">{anno(on, <circle cx="12" cy="4" r="2.500" stroke={on} fill="#333" />)}</SB>
          <SB label="自动缩放">{anno(off, <path d="M14 1l-3 4h3l-2 4" stroke="#eee" />)}</SB>
          <SB label="注释比例">{anno(off)}</SB>
          <button className="flex items-center gap-[5px] font-semibold">1:1<Tri big /></button>
        </SGroup>
        <div className="flex">
          <SGroup width="w-[41px]"><SB label="工作空间"><Ico s={14}><circle cx="7" cy="7" r="4" stroke={off} strokeWidth="3" /><circle cx="7" cy="7" r="5.800" stroke={off} strokeWidth="2" strokeDasharray="2.500 2" /></Ico></SB><Tri big /></SGroup>
          <SGroup width="w-[26px]"><SB label="注释监视器"><Ico s={14}><path d="M7 0v14M0 7h14" stroke={off} strokeWidth="1.600" /></Ico></SB></SGroup>
        </div>
        <SGroup width="w-[26px]"><SB label="隔离对象"><Ico s={18}><rect x="2" y="2" width="6" height="6" stroke={off} /><circle cx="13" cy="7" r="3" stroke={off} /><path d="M7 10l4 6H4z" stroke={off} /></Ico></SB></SGroup>
        <SGroup width="w-[26px]"><SB label="图形性能"><Ico s={18}><circle cx="9" cy="9" r="7.500" fill="#00509a" stroke={on} strokeWidth="1.500" /><path d="M8 12l6-4" stroke={on} /></Ico></SB></SGroup>
        <SGroup width="w-[49px]">
          <SB label="全屏显示"><Ico s={18}><rect x="1.500" y="3.500" width="15" height="11" stroke={off} /><path d="M10 8l4-3M11 5h3v3M8 10l-4 3M7 13H4v-3" stroke="#ddd" /></Ico></SB>
          <SB label="自定义"><Ico s={16}><path d="M1 3h14M1 8h14M1 13h14" stroke={off} strokeWidth="2" /></Ico></SB>
        </SGroup>
      </div>
    </div>
  );
}

const WeChat = ({ s }: { s: number }) => (
  <svg width={s} height={s} viewBox="0 0 24 24" aria-hidden="true"><ellipse cx="9.500" cy="9.500" rx="9" ry="8" fill="#2fdc6a" /><path d="M4 14v5l5-3z" fill="#2fdc6a" /><ellipse cx="17" cy="15.500" rx="7" ry="6" fill="#eee" /><path d="M19 19l3 4v-5z" fill="#eee" /><circle cx="6.500" cy="7" r="1.100" fill="#0a5" /><circle cx="12" cy="7" r="1.100" fill="#0a5" /><circle cx="15" cy="13.500" r=".9" fill="#888" /><circle cx="19.500" cy="13.500" r=".9" fill="#888" /></svg>
);

const APPS: { name: string; open: boolean; icon: React.ReactNode }[] = [
  { name: "Cortana", open: false, icon: <Ico s={24}><circle cx="12" cy="12" r="6.500" stroke="#fff" strokeWidth="2" /></Ico> },
  { name: "任务视图", open: false, icon: <Ico s={24}><path d="M4 4v3h10V4M4 20v-3h10v3M4.500 9.500h9v5h-9z" stroke="#fff" strokeWidth="1.200" /><path d="M17.500 4v4M17.500 14v6" stroke="#fff" /><rect x="16" y="9" width="3" height="3" fill="#fff" /></Ico> },
  { name: "Edge", open: false, icon: (
    <Ico s={24}>
      <defs>
        <linearGradient id="e1" x2="1"><stop stopColor="#1fa6e8" /><stop offset="1" stopColor="#5fe05b" /></linearGradient>
        <linearGradient id="e2" x2="0" y2="1"><stop stopColor="#1488dd" /><stop offset="1" stopColor="#0c59a4" /></linearGradient>
      </defs>
      <circle cx="12" cy="12" r="12" fill="url(#e2)" /><path d="M.3 11C1 4 6 0 12 0c7 0 12 5 12 10 0 4-3 6-6 6-4 0-5-1-4-3 1-3-1-6-5-6C5 7 1 8 .3 11z" fill="url(#e1)" /><path d="M9 10c-3 5 0 12 6 13 3 0 6-2 8-5-8 3-14-1-14-8z" fill="#1b7fd6" /><path d="M14 13c-1 2 1 3.500 4 3.500 2.500 0 5-1 6-3.500v5c-6 2-11-1-10-5z" fill="#454545" />
    </Ico>
  ) },
  { name: "资源管理器", open: true, icon: <Ico s={24}><path d="M1 2h9v4H1z" fill="#e6a20e" /><path d="M1 4h22v17H1z" fill="#ffd467" /><path d="M5 22v-8h14v8h-3v-4H8v4z" fill="#3a94dc" /></Ico> },
  { name: "远程", open: true, icon: <Ico s={24}><ellipse cx="12" cy="12" rx="11.500" ry="12" fill="#1e96c0" /><rect x="5.500" y="4.500" width="13" height="10" stroke="#fff" fill="#17799c" /><path d="M10 7l4 5M14 7l-4 5M12 15v4M7 19.500h10" stroke="#fff" strokeWidth="1.200" /></Ico> },
  { name: "记事本", open: true, icon: <Ico s={24}><path d="M20 3l2 2-2 17-4 1z" fill="#9a6b25" /><path d="M10 1h11l-5 20-15-4z" fill="#7cc3d4" /><path d="M10 1h11l-1 3H9z" fill="#cdd7da" /><path d="M8 5h6L8 18l-6-2z" fill="#b9e3ec" /></Ico> },
  { name: "监视器", open: true, icon: <Ico s={24}><path d="M1 5h12v13H1z" fill="#b9bdc0" /><path d="M5 2h18l-1 14H5z" fill="#d2d5d7" /><path d="M7 4h14l-1 10H7z" fill="#f7fbff" /><path d="M8 12l3-5 3 4 2-4 3 5" stroke="#2f86c9" /><ellipse cx="15" cy="20" rx="6" ry="2.500" fill="#d0d3d5" /><path d="M1 8v4" stroke="#5fbf3a" strokeWidth="2" /></Ico> },
  { name: "WPS", open: true, icon: <Ico s={24}><path d="M1 3h7l-2 5 4 11-2 3H6z" fill="#f01818" /><path d="M14 3h10l-7 19h-3l-3-8z" fill="#ff3d14" /><path d="M11 3h6L10 22H7z" fill="#ff7a3d" /></Ico> },
  { name: "AutoCAD", open: true, icon: <Ico s={24}><path d="M0 0h24v24H0z" fill="#fbeee9" /><path d="M10 2h5l6 18h-4l-2-5-5 2-2 4H4z" fill="#b6242b" /><path d="M12 9l2 4-4 1z" fill="#fbeee9" /></Ico> },
  { name: "浏览器", open: true, icon: <Ico s={24}><path d="M18.500 17A9 9 0 1 0 5 18l-1 3h9" stroke="#1e9bf0" strokeWidth="3" /><path d="M19 12l2 4-2 2-2-2z" fill="#7ed321" /><path d="M24 18l-4 2-2-1 2-3z" fill="#22c3f3" /><path d="M18 24l-1-4 2-2 2 2z" fill="#ff7a1a" /><path d="M12 17l4-1 2 2-2 2z" fill="#ffc61a" /></Ico> },
  { name: "图库", open: true, icon: <Ico s={24}><circle cx="16" cy="4" r="3.200" fill="#ffb300" /><path d="M0 21L7 8q2-3 4 0l3 5-4 8z" fill="#8d7cf5" /><path d="M10 21l5-9q2-2 4 0l5 9z" fill="#5536d6" /></Ico> },
  { name: "微信", open: true, icon: <WeChat s={24} /> },
];

function Taskbar() {
  return (
    <footer className="flex h-10 items-stretch bg-linear-to-r from-[#3b3b3b] via-[#454545] via-44% to-[#1f2843] to-80% text-white">
      <button aria-label="开始" className="flex w-12 items-center justify-center"><svg width="16" height="16" fill="#fff"><path d="M0 2.200L6.500 1.300V7.500H0zM7.500 1.100L16 0V7.500H7.500zM0 8.500H6.500V14.700L0 13.800zM7.500 8.500H16V16L7.500 14.900z" /></svg></button>
      <label className="flex w-[344px] items-center gap-[11px] border border-[#bbb] bg-[#f2f2f2] pl-[11px]">
        <svg width="17" height="17" fill="none" stroke="#222" strokeWidth="1.300"><circle cx="10.500" cy="6.500" r="5" /><path d="M7 10L.5 16.500" /></svg>
        <input aria-label="搜索" placeholder="在这里输入你要搜索的内容" className="min-w-0 flex-1 bg-transparent text-[14px] outline-none placeholder:text-[#222]" />
      </label>
      {APPS.map((a) => (
        <button key={a.name} aria-label={a.name} className={a.name === "AutoCAD" ? "flex w-[49px] flex-col items-center bg-linear-to-r from-[#6d6d6d] from-90% to-[#5c5c5c] to-90%" : "flex w-[49px] flex-col items-center"}>
          <span className="flex h-[38px] items-center pt-px">{a.icon}</span>
          {a.open && <span className={a.name === "AutoCAD" ? "h-[2px] w-full bg-[#5a8fd0]" : "h-[2px] w-10 bg-[#5585c0]"} />}
        </button>
      ))}
      <div className="flex-1" />
      <div className="flex items-center text-[14px]">
        <button className="flex items-center gap-[11px]"><svg width="23" height="18" aria-hidden="true"><path d="M6 17a5 5 0 0 1-1-9 6 6 0 0 1 11-2 5.500 5.500 0 0 1 1 11z" fill="#cfe6fb" /><path d="M5 17q7-1 11-7 6 2 3 6z" fill="#fff" /><rect x="16" y="0" width="3" height="7" rx="1.500" fill="#e01b3c" /><circle cx="17.500" cy="10" r="1.500" fill="#e01b3c" /></svg><span>23℃&nbsp; 阴</span></button>
        <button aria-label="显示隐藏图标" className="ml-[18px]"><svg width="12" height="7" fill="none" stroke="#fff" strokeWidth="1.300"><path d="M.5 6L6 1L11.500 6" /></svg></button>
        <button aria-label="微信" className="ml-[10px]"><WeChat s={16} /></button>
        <button aria-label="网络" className="ml-[10px]"><svg width="14" height="14" fill="none" stroke="#ccc" strokeWidth="1.200"><path d="M1 13Q1 2 13 1M4 13Q4 5 13 4M7 13Q7 8 13 7" /><circle cx="11.500" cy="11.500" r="1.500" fill="#fff" /></svg></button>
        <button aria-label="音量" className="ml-[9px]"><svg width="15" height="14" fill="none" stroke="#fff"><path d="M.5 5H3L6.500 1.500V12.500L3 9H.5zM9.500 5L13.500 9M13.500 5L9.500 9" /></svg></button>
        <button aria-label="电池" className="ml-[9px]"><svg width="17" height="13" fill="none" stroke="#fff"><path d="M6 3.500h9v7H3.500V8M15.500 5.500h1v3h-1M1.500 1v3q2 3 4 0V1M3.500 5v3" /><path d="M6.500 5.500h6.500v3H6.500z" fill="#fff" /></svg></button>
        <button className="ml-[7px] text-[14px]">英</button>
        <button className="ml-[14px] flex size-4 items-center justify-center bg-white text-[14px] leading-none text-black">拼</button>
        <button className="ml-[11px] flex w-[70px] flex-col items-center text-[12px] leading-[19px]"><span>23:52</span><span>2022/5/18</span></button>
        <button aria-label="通知" className="relative mr-[9px] ml-[13px] flex h-10 w-7 items-center">
          <svg width="18" height="18" aria-hidden="true"><path d="M1 1h16v12h-5v4l-4-4H1z" fill="#fff" /><path d="M3 4.500h11M3 7.500h11M3 10.500h7" stroke="#223" /></svg>
          <span className="absolute right-[2px] bottom-[4px] flex size-4 items-center justify-center rounded-full border border-[#999] bg-[#333] text-[12px] leading-none font-bold">4</span>
        </button>
        <span className="mr-[4px] h-10 w-px bg-[#6b7080]" />
      </div>
    </footer>
  );
}

export default function App() {
  return (
    <div className="flex h-screen flex-col overflow-hidden bg-[#383838] font-['Open_Sans','Noto_Sans_CJK_SC',sans-serif]">
      <Header />
      <DocTabs />
      <Workspace />
      <StatusBar />
      <Taskbar />
    </div>
  );
}
